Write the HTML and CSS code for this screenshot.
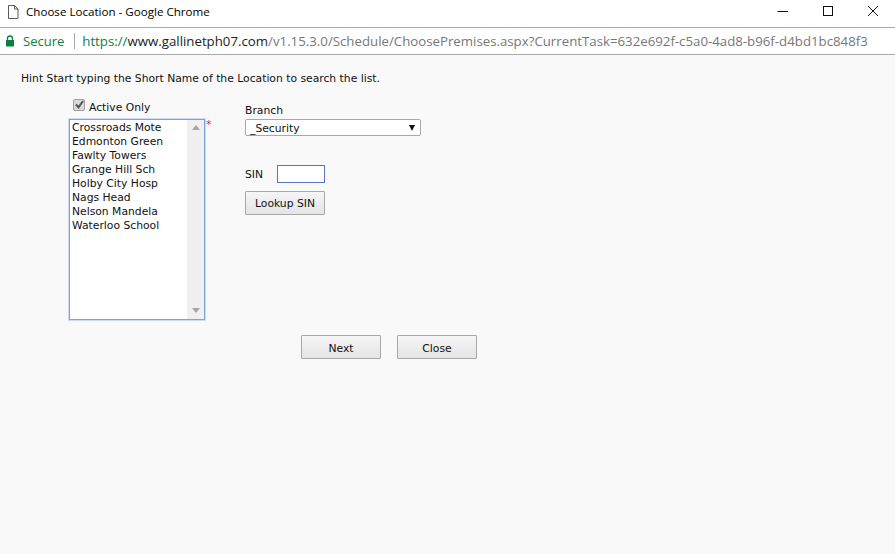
FILE: index.html
```html
<!DOCTYPE html>
<html lang="en">
<head>
<meta charset="utf-8">
<title>Choose Location - Google Chrome</title>
<link rel="stylesheet" href="styles.css">
</head>
<body>
<header class="titlebar">
  <svg class="doc-icon" width="14" height="16" viewBox="0 0 14 16"><path d="M2.500 1.500h6l3.500 3.500v9.500h-9.500z M8.500 1.500v3.500h3.500" fill="#fff" stroke="#5a5a5a" stroke-width="1"/></svg>
  <span class="window-title">Choose Location - Google Chrome</span>
  <div class="window-controls">
    <svg width="12" height="12" viewBox="0 0 12 12"><path d="M0.500 6.500h10.500" stroke="#111" stroke-width="1"/></svg>
    <svg width="12" height="12" viewBox="0 0 12 12"><rect x="1.500" y="1.500" width="9" height="9" fill="none" stroke="#111"/></svg>
    <svg width="12" height="12" viewBox="0 0 12 12"><path d="M1 1l10 10M11 1L1 11" stroke="#111" stroke-width="1"/></svg>
  </div>
</header>
<nav class="addressbar">
  <svg class="lock" width="10" height="12" viewBox="0 0 10 12"><path d="M2.500 5V3.500a2.500 2.500 0 0 1 5 0V5" fill="none" stroke="#0b8043" stroke-width="1.300"/><rect x="1" y="5" width="8" height="6.500" fill="#0b8043"/></svg>
  <span class="secure">Secure</span>
  <span class="divider"></span>
  <span class="url"><span class="scheme">https://</span><span class="host">www.gallinetph07.com</span>/v1.15.3.0/Schedule/ChoosePremises.aspx?CurrentTask=632e692f-c5a0-4ad8-b96f-d4bd1bc848f3</span>
</nav>
<main class="content">
  <p class="hint">Hint Start typing the Short Name of the Location to search the list.</p>
  <div class="form-row">
    <div class="list-col">
      <label class="active-only"><span class="checkbox"><svg width="9" height="9" viewBox="0 0 9 9"><path d="M1 4.500l2.500 2.800L8 1" fill="none" stroke="#555" stroke-width="2"/></svg></span><span class="active-text">Active Only</span></label>
      <div class="list-wrap">
        <div class="listbox">
          <ul class="options">
            <li>Crossroads Mote</li>
            <li>Edmonton Green</li>
            <li>Fawlty Towers</li>
            <li>Grange Hill Sch</li>
            <li>Holby City Hosp</li>
            <li>Nags Head</li>
            <li>Nelson Mandela</li>
            <li>Waterloo School</li>
          </ul>
          <div class="scrollbar"><span class="arrow-up"></span><span class="arrow-down"></span></div>
        </div>
        <span class="required">*</span>
      </div>
    </div>
    <div class="side-col">
      <div class="branch-label">Branch</div>
      <div class="select"><span class="select-text">_Security</span><span class="select-arrow"></span></div>
      <div class="sin-row"><span class="sin-label">SIN</span><span class="sin-input"></span></div>
      <button class="btn lookup" type="button">Lookup SIN</button>
    </div>
  </div>
  <div class="actions">
    <button class="btn action" type="button">Next</button>
    <button class="btn action" type="button">Close</button>
  </div>
</main>
</body>
</html>
```
FILE: styles.css
```css
* { box-sizing: border-box; }
html, body { margin: 0; height: 100%; }
body {
  width: 895px;
  height: 554px;
  overflow: hidden;
  display: flex;
  flex-direction: column;
  background: #f9f9f9;
  font-family: "DejaVu Sans", Verdana, sans-serif;
  font-size: 10.78px;
  color: #111;
}
.titlebar {
  height: 28px;
  flex: none;
  display: flex;
  align-items: center;
  padding-left: 6px;
  background: #fff;
  border-bottom: 1px solid #a8a8a8;
}
.doc-icon { margin-right: 6px; margin-top: -4px; }
.window-title {
  font-family: "Open Sans", "Noto Sans", sans-serif;
  font-size: 11.6px;
  color: #000;
  margin-top: -4px;
}
.window-controls {
  margin-left: auto;
  margin-top: -5px;
  padding-right: 16px;
  display: flex;
  gap: 33px;
}
.addressbar {
  height: 27px;
  flex: none;
  display: flex;
  align-items: center;
  padding-left: 5px;
  background: #fff;
  border-bottom: 1px solid #a8a8a8;
  font-family: "Open Sans", "Noto Sans", sans-serif;
  white-space: nowrap;
}
.lock { margin-right: 8px; }
.secure { color: #0b8043; font-size: 13px; }
.divider { width: 1px; height: 16px; background: #a8a8a8; margin: 0 7px 0 10px; }
.url { color: #777; font-size: 13.25px; }
.scheme { color: #0b8043; }
.host { color: #222; }
.content { flex: 1; padding: 17px 0 0 21px; }
.hint { margin: 0; line-height: 13px; }
.form-row { display: flex; margin-top: 12px; }
.list-col { width: 176px; padding-left: 48px; flex: none; }
.active-only { display: flex; align-items: center; height: 19px; padding-left: 4px; }
.active-text { padding-top: 2px; }
.checkbox {
  width: 12px;
  height: 12px;
  margin-right: 4px;
  margin-top: -4px;
  background: #d9d9d9;
  border: 1px solid #a0a0a0;
  border-radius: 2px;
  display: flex;
  align-items: center;
  justify-content: center;
}
.list-wrap { display: flex; margin-top: 3px; }
.listbox {
  width: 136px;
  height: 201px;
  flex: none;
  display: flex;
  background: #fff;
  border: 1px solid #7b9fe8;
  box-shadow: 0 0 0 1px rgba(140, 175, 245, .4);
}
.options {
  flex: 1;
  list-style: none;
  margin: 0;
  padding: 1px 0 0 2px;
  line-height: 14px;
}
.scrollbar {
  width: 17px;
  flex: none;
  background: #f0f0f0;
  display: flex;
  flex-direction: column;
  justify-content: space-between;
  align-items: center;
  padding: 5px 0 6px;
}
.arrow-up, .arrow-down { width: 0; height: 0; border-left: 4px solid transparent; border-right: 4px solid transparent; }
.arrow-up { border-bottom: 5px solid #a5a5a5; }
.arrow-down { border-top: 5px solid #a5a5a5; }
.required { color: #e8264f; font-size: 11px; line-height: 12px; margin-left: 1px; }
.side-col { padding-left: 48px; padding-top: 7px; }
.branch-label { line-height: 13px; }
.select {
  width: 176px;
  height: 17px;
  margin-top: 2px;
  display: flex;
  align-items: center;
  justify-content: space-between;
  padding: 0 5px 0 4px;
  background: #fff;
  border: 1px solid #a8a8a8;
  border-radius: 2px;
}
.select-text { padding-top: 2px; }
.select-arrow { width: 0; height: 0; border-left: 3.500px solid transparent; border-right: 3.500px solid transparent; border-top: 6px solid #111; }
.sin-row { display: flex; align-items: center; margin-top: 29px; }
.sin-label { width: 32px; }
.sin-input { width: 48px; height: 18px; background: #fff; border: 1px solid #5b73c4; }
.btn {
  height: 24px;
  padding: 0;
  font: inherit;
  color: #111;
  background: linear-gradient(#f6f6f6, #e4e4e4);
  border: 1px solid #a8a8a8;
  border-radius: 1px;
}
.lookup { width: 80px; margin-top: 8px; display: block; }
.actions { display: flex; gap: 16px; margin-top: 15px; padding-left: 280px; }
.action { width: 80px; padding-top: 2px; }
```
